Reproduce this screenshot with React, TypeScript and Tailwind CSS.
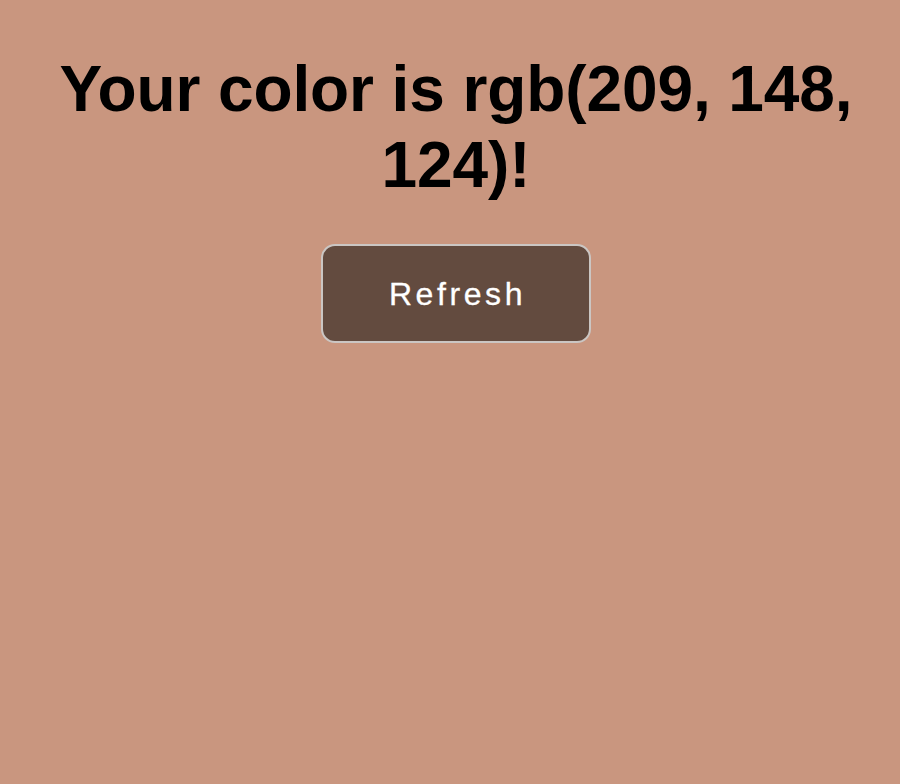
export default function App() {
  return (
    <div className="min-h-[784px] w-full bg-[#c9967f] pl-3 pt-[51px] font-['Liberation_Sans',Arial,sans-serif]">
      <div className="flex flex-col items-center">
        <h1 className="text-center text-[64px] font-bold leading-[76px] tracking-[-0.1px] text-black">
          Your color is rgb(209, 148,
          <br />
          124)!
        </h1>
        <button className="mt-[41px] flex h-[99px] w-[270px] items-center justify-center rounded-[14px] border-2 border-[#cbc6c3] bg-[#634b3f] pl-[3px] text-[32px] tracking-[3.6px] text-white [-webkit-text-stroke:0.3px_white]">
          Refresh
        </button>
      </div>
    </div>
  );
}
